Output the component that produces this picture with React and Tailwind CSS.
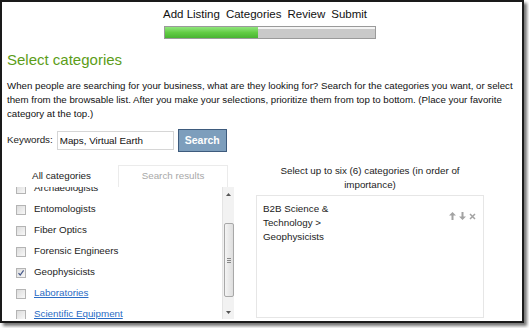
import { useState } from 'react';

const STEPS = ['Add Listing', 'Categories', 'Review', 'Submit'];

const CATEGORIES = [
  { name: 'Archaeologists' },
  { name: 'Entomologists' },
  { name: 'Fiber Optics' },
  { name: 'Forensic Engineers' },
  { name: 'Geophysicists', checked: true },
  { name: 'Laboratories', link: true },
  { name: 'Scientific Equipment', link: true },
];

function Checkbox({ checked }) {
  return (
    <span className="flex-none w-[10px] h-[10px] border border-[#b4b4b4] bg-gradient-to-br from-[#dcdcdc] to-[#f8f8f8] flex items-center justify-center">
      {checked && (
        <svg width="8" height="8" viewBox="0 0 8 8">
          <path d="M1.5 4.2 L3.2 6 L6.6 1.4" fill="none" stroke="#46598a" strokeWidth="1.2" />
        </svg>
      )}
    </span>
  );
}

function Arrow({ down }) {
  return (
    <svg width="7" height="8" viewBox="0 0 7 8" className={down ? 'rotate-180' : ''}>
      <path d="M3.5 0 L7 3.5 L4.5 3.5 L4.5 8 L2.5 8 L2.5 3.5 L0 3.5 Z" fill="#a3a3a3" />
    </svg>
  );
}

function Scrollbar() {
  return (
    <div className="flex-none w-[12px] flex flex-col items-center bg-[#f2f2f2] border-l border-[#e4e4e4]">
      <div className="h-[14px] flex items-center justify-center">
        <svg width="5" height="3" viewBox="0 0 5 3"><path d="M0 3 L2.5 0 L5 3 Z" fill="#555" /></svg>
      </div>
      <div className="h-[22px]" />
      <div className="w-[10px] h-[74px] rounded-[2px] border border-[#a8a8a8] bg-gradient-to-r from-[#f4f4f4] to-[#dedede] flex flex-col items-center justify-center gap-[1px]">
        <span className="w-[4px] h-px bg-[#888]" />
        <span className="w-[4px] h-px bg-[#888]" />
        <span className="w-[4px] h-px bg-[#888]" />
      </div>
      <div className="flex-1" />
      <div className="h-[14px] flex items-center justify-center">
        <svg width="5" height="3" viewBox="0 0 5 3"><path d="M0 0 L2.5 3 L5 0 Z" fill="#555" /></svg>
      </div>
    </div>
  );
}

export default function App() {
  const [keywords, setKeywords] = useState('Maps, Virtual Earth');

  return (
    <div className="w-[529px] h-[328px] bg-white overflow-hidden" style={{ fontFamily: '"Liberation Sans", Arial, sans-serif' }}>
      <div className="w-[524px] h-[323px] border-2 border-[#1a1a1a] shadow-[3px_3px_3px_rgba(0,0,0,0.55)] overflow-hidden text-[#222]">
        {/* Steps */}
        <div className="flex flex-col items-center pt-[4px] pl-[16px]">
          <div className="-ml-[10px] flex gap-[6px] text-[11.5px] leading-[16px] text-[#111]">
            {STEPS.map((s) => (
              <span key={s}>{s}</span>
            ))}
          </div>
          <div className="mt-[4px] w-[212px] h-[13px] border border-[#9a9a9a] flex bg-[#c9c9c9]">
            <div className="w-[93px] bg-gradient-to-b from-[#90e57c] via-[#62cc44] to-[#48b432]" />
            <div className="flex-1 border-t-2 border-white/80" />
          </div>
        </div>

        {/* Heading */}
        <h1 className="mt-[11px] ml-[5px] text-[15px] leading-[20px] text-[#5c9d18]">Select categories</h1>

        <p className="mt-[9px] ml-[5px] text-[9.7px] leading-[14px] text-[#111]">
          When people are searching for your business, what are they looking for? Search for the categories you want, or select them from the browsable list. After you make your selections, prioritize them from top to bottom. (Place your favorite category at the top.)
        </p>

        {/* Keywords */}
        <div className="mt-[8px] ml-[5px] flex items-center gap-[4px] text-[9.8px]">
          <span>Keywords:</span>
          <input
            value={keywords}
            onChange={(e) => setKeywords(e.target.value)}
            className="w-[117px] h-[19px] px-[2px] border border-[#d6d6d6] text-[9.8px] text-[#111] outline-none"
          />
          <button className="w-[49px] h-[23px] bg-[#7d9ebc] border border-[#3e5b7d] text-white font-bold text-[10.5px]">
            Search
          </button>
        </div>

        <div className="mt-[13px] flex">
          {/* Left browse panel */}
          <div className="ml-[3px] w-[229px] flex flex-col">
            <div className="flex h-[22px] text-[9.8px]">
              <div className="w-[113px] flex items-center justify-center">All categories</div>
              <div className="w-[110px] flex items-center justify-center border border-b-0 border-[#ebebeb] text-[#a8a8a8]">
                Search results
              </div>
            </div>
            <div className="h-[132px] flex overflow-hidden">
              <div className="flex-1 overflow-hidden">
                <div className="-mt-[9px] flex flex-col">
                  {CATEGORIES.map((c) => (
                    <label key={c.name} className="h-[21px] flex items-center gap-[8px] pl-[11px] text-[9.8px]">
                      <Checkbox checked={c.checked} />
                      <span className={c.link ? 'text-[#2b6cc4] underline' : 'text-[#222]'}>{c.name}</span>
                    </label>
                  ))}
                </div>
              </div>
              <Scrollbar />
            </div>
          </div>

          {/* Right selected panel */}
          <div className="ml-[22px] w-[228px] flex flex-col">
            <p className="-mt-[1px] px-[10px] text-center text-[9.8px] leading-[14px]">
              Select up to six (6) categories (in order of importance)
            </p>
            <div className="mt-[3px] h-[123px] border border-[#e6e6e6] px-[6px] pt-[6px] flex items-start">
              <div className="w-[80px] text-[9.8px] leading-[14px] text-[#222]">
                B2B Science &amp; Technology &gt; Geophysicists
              </div>
              <div className="ml-auto mt-[10px] mr-[1px] flex items-center gap-[3px]">
                <Arrow />
                <Arrow down />
                <svg width="7" height="7" viewBox="0 0 7 7">
                  <path d="M1 1 L6 6 M6 1 L1 6" stroke="#a3a3a3" strokeWidth="1.5" />
                </svg>
              </div>
            </div>
          </div>
        </div>
      </div>
    </div>
  );
}
